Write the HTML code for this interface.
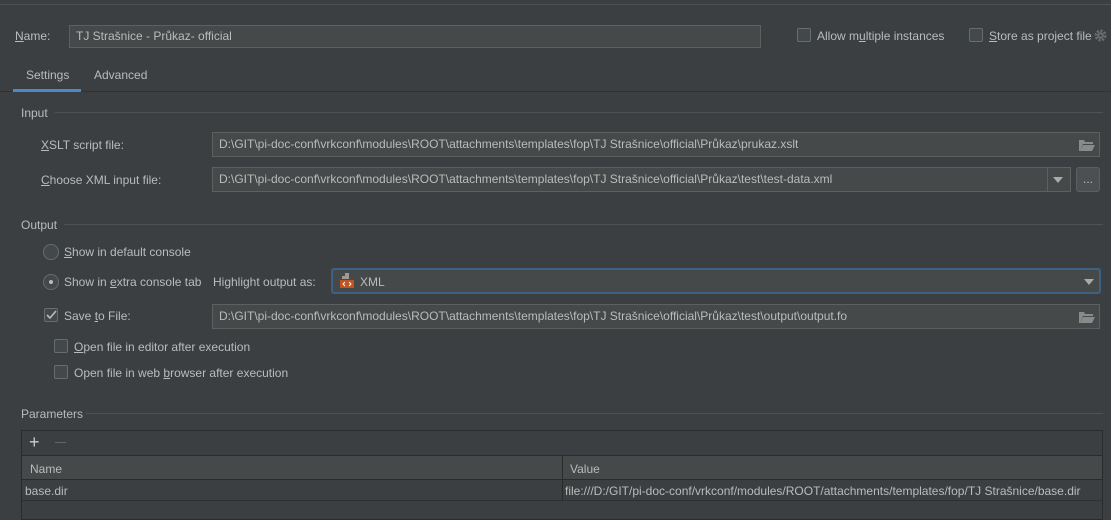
<!DOCTYPE html>
<html><head><style>
*{box-sizing:border-box;margin:0;padding:0}
body{width:1111px;height:512px;overflow:hidden;background:#3c3f41;font-family:"Liberation Sans",sans-serif;font-size:12px;color:#bbbbbb;position:relative}
.a{position:absolute;white-space:nowrap}
.f{position:absolute;background:#45494a;border:1px solid #5e6060;padding-left:6px;line-height:22px;white-space:nowrap;overflow:hidden}
.cb{position:absolute;width:14px;height:14px;border:1px solid #6b6b6b;border-radius:2px;background:#43494a}
.rd{position:absolute;width:16px;height:16px;border:1px solid #6b6b6b;border-radius:50%;background:#43494a}
.ln{position:absolute;height:1px;background:#515151}
u{text-decoration:underline}
</style></head><body>
<div class="ln" style="left:0;top:4px;width:1111px;background:#515151"></div>
<div class="a" style="left:15px;top:29px"><u>N</u>ame:</div>
<div class="f" style="left:69px;top:25px;width:692px;height:23px;line-height:21px">TJ Strašnice - Průkaz- official</div>
<div class="cb" style="left:797px;top:28px"></div>
<div class="a" style="left:817px;top:29px">Allow m<u>u</u>ltiple instances</div>
<div class="cb" style="left:969px;top:28px"></div>
<div class="a" style="left:989px;top:29px"><u>S</u>tore as project file</div>
<svg class="a" style="left:1094px;top:29px" width="13" height="13" viewBox="0 0 13 13"><circle cx="6.5" cy="6.5" r="4.5" fill="none" stroke="#6e6e6e" stroke-width="3" stroke-dasharray="2 1.5"/><circle cx="6.5" cy="6.5" r="3" fill="#6e6e6e"/><circle cx="6.5" cy="6.5" r="1.3" fill="#3c3f41"/></svg>
<div class="a" style="left:26px;top:68px">Settings</div>
<div class="a" style="left:94px;top:68px">Advanced</div>
<div class="ln" style="left:0;top:91px;width:1111px;background:#323232"></div>
<div class="a" style="left:13px;top:89px;width:68px;height:3px;background:#4a88c7"></div>
<div class="a" style="left:21px;top:106px">Input</div>
<div class="ln" style="left:55px;top:112px;width:1048px"></div>
<div class="a" style="left:41px;top:138px"><u>X</u>SLT script file:</div>
<div class="f" style="left:212px;top:132px;width:888px;height:25px">D:\GIT\pi-doc-conf\vrkconf\modules\ROOT\attachments\templates\fop\TJ Strašnice\official\Průkaz\prukaz.xslt</div>
<svg class="a" style="left:1079px;top:139px" width="16" height="12"><path d="M0 1h5l1 2h8v2H4L1 12H0z M4 6h12l-3 6H1z" fill="#8a8a8a"/></svg>
<div class="a" style="left:41px;top:173px"><u>C</u>hoose XML input file:</div>
<div class="f" style="left:212px;top:167px;width:859px;height:25px">D:\GIT\pi-doc-conf\vrkconf\modules\ROOT\attachments\templates\fop\TJ Strašnice\official\Průkaz\test\test-data.xml</div>
<div class="a" style="left:1047px;top:168px;width:1px;height:23px;background:#5e6060"></div>
<svg class="a" style="left:1053px;top:177px" width="11" height="6"><path d="M0 0h10L5 6z" fill="#aaa"/></svg>
<div class="a" style="left:1076px;top:167px;width:24px;height:25px;border:1px solid #5e6060;border-radius:3px;background:#4c5052;text-align:center;line-height:22px">...</div>
<div class="a" style="left:21px;top:218px">Output</div>
<div class="ln" style="left:64px;top:224px;width:1039px"></div>
<div class="rd" style="left:43px;top:244px"></div>
<div class="a" style="left:64px;top:245px"><u>S</u>how in default console</div>
<div class="rd" style="left:43px;top:274px"></div>
<div class="a" style="left:49px;top:280px;width:4px;height:4px;border-radius:50%;background:#bbb"></div>
<div class="a" style="left:64px;top:275px">Show in <u>e</u>xtra console tab</div>
<div class="a" style="left:213px;top:275px">Highlight output as:</div>
<div class="a" style="left:331px;top:268px;width:770px;height:26px;border:2px solid #3d6185;border-radius:3px;background:#45494a"></div>
<svg class="a" style="left:340px;top:273px" width="14" height="16"><path d="M5 0h4v6H5z M2 3h3v3H2z" fill="#9a9a9a"/><rect x="0" y="7" width="14" height="8" fill="#c0531e"/><path d="M5 9l-2 2 2 2 M9 9l2 2-2 2" stroke="#fff" fill="none"/></svg>
<div class="a" style="left:360px;top:275px">XML</div>
<svg class="a" style="left:1084px;top:279px" width="11" height="6"><path d="M0 0h10L5 6z" fill="#aaa"/></svg>
<div class="cb" style="left:44px;top:308px"></div>
<svg class="a" style="left:46px;top:310px" width="11" height="10"><path d="M1 5l3 3 6-7" stroke="#bbb" stroke-width="1.6" fill="none"/></svg>
<div class="a" style="left:64px;top:309px">Save <u>t</u>o File:</div>
<div class="f" style="left:212px;top:304px;width:888px;height:25px">D:\GIT\pi-doc-conf\vrkconf\modules\ROOT\attachments\templates\fop\TJ Strašnice\official\Průkaz\test\output\output.fo</div>
<svg class="a" style="left:1079px;top:311px" width="16" height="12"><path d="M0 1h5l1 2h8v2H4L1 12H0z M4 6h12l-3 6H1z" fill="#8a8a8a"/></svg>
<div class="cb" style="left:54px;top:339px"></div>
<div class="a" style="left:74px;top:340px"><u>O</u>pen file in editor after execution</div>
<div class="cb" style="left:54px;top:365px"></div>
<div class="a" style="left:74px;top:366px">Open file in web <u>b</u>rowser after execution</div>
<div class="a" style="left:21px;top:407px">Parameters</div>
<div class="ln" style="left:86px;top:413px;width:1017px"></div>
<div class="a" style="left:21px;top:430px;width:1082px;height:90px;border:1px solid #2b2b2b;background:#3c3f41"></div>
<div class="a" style="left:29px;top:432px;font-size:18px;color:#ccc">+</div>
<div class="a" style="left:55px;top:442px;width:11px;height:1px;background:#666"></div>
<div class="a" style="left:22px;top:455px;width:1080px;height:25px;background:#45494a;border-top:1px solid #2b2b2b;border-bottom:1px solid #2b2b2b"></div>
<div class="a" style="left:562px;top:456px;width:1px;height:44px;background:#2b2b2b"></div>
<div class="a" style="left:30px;top:462px">Name</div>
<div class="a" style="left:570px;top:462px">Value</div>
<div class="a" style="left:22px;top:500px;width:1080px;height:1px;background:#2f2f2f"></div>
<div class="a" style="left:25px;top:484px">base.dir</div>
<div class="a" style="left:565px;top:484px">file:///D:/GIT/pi-doc-conf/vrkconf/modules/ROOT/attachments/templates/fop/TJ Strašnice/base.dir</div>
</body></html>
